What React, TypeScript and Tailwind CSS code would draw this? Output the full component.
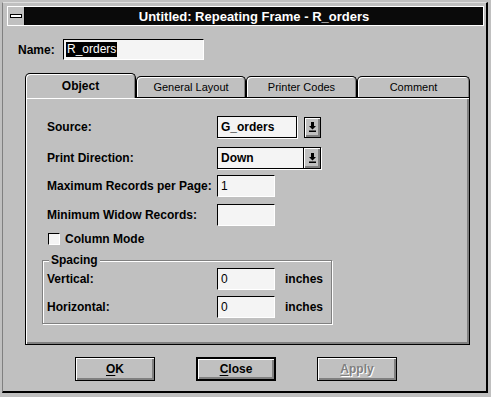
import React from 'react'

const raised = 'shadow-[inset_1px_1px_0_#ffffff,inset_-2px_-2px_0_#808080]'

const DownArrow = () => (
  <svg width="7" height="10" viewBox="0 0 7 10">
    <path d="M2 0h3v4h2L3.5 7.5 0 4h2z" fill="#000" />
    <rect x="0" y="8.5" width="7" height="1.5" fill="#000" />
  </svg>
)

const Sunken = ({ value, w }: { value?: string; w: string }) => (
  <div
    className={`${w} h-[22px] bg-[#f4f4f4] border border-t-black border-l-black border-r-white border-b-white flex items-center pl-[3px] text-[12px] leading-none`}
  >
    {value}
  </div>
)

const Label = ({ children }: { children: React.ReactNode }) => (
  <div className="w-[170px] text-[12px] font-bold leading-none">{children}</div>
)

const Button = ({
  u,
  rest,
  isDefault,
  disabled,
}: {
  u: string
  rest: string
  isDefault?: boolean
  disabled?: boolean
}) => (
  <div
    className={`w-[80px] h-[24px] bg-[#c0c0c0] border-black ${isDefault ? 'border-2' : 'border'} ${raised} flex items-center justify-center text-[12px] font-bold leading-none ${
      disabled ? 'text-[#808080] [text-shadow:1px_1px_0_#ffffff]' : 'text-black'
    }`}
  >
    <span className="underline underline-offset-2">{u}</span>
    {rest}
  </div>
)

const tabs = [
  { name: 'General Layout', w: 'w-[110px]' },
  { name: 'Printer Codes', w: 'w-[111px]' },
  { name: 'Comment', w: 'w-[113px]' },
]

export default function App() {
  return (
    <div className="w-[491px] h-[397px] bg-[#c0c0c0] pt-[2px] pl-[2px] font-['Liberation_Sans',Arial,sans-serif] text-black">
      <div className="w-[486px] h-[391px] border border-l-[#808080] border-t-[#dfdfdf] border-r-black border-b-black border-r-2 border-b-2 flex flex-col">
        {/* title bar */}
        <div className="ml-[4px] mt-[3px] w-[477px] h-[20px] border border-white bg-[#0a0a0a] flex items-stretch">
          <div className="w-[17px] bg-[#c0c0c0] border-r border-black flex items-center justify-center">
            <div className="w-[12px] h-[4px] bg-white border border-black" />
          </div>
          <div className="flex-1 flex items-center justify-center text-white text-[13px] font-bold leading-none">
            Untitled: Repeating Frame - R_orders
          </div>
        </div>

        {/* name row */}
        <div className="mt-[13px] pl-[15px] flex items-center h-[21px]">
          <div className="w-[45px] text-[12px] font-bold leading-none">Name:</div>
          <div className="w-[141px] h-[21px] bg-[#f4f4f4] border border-t-black border-l-black border-r-white border-b-white flex items-center pl-[2px]">
            <span className="bg-black text-white text-[12px] leading-[15px] px-[1px]">R_orders</span>
          </div>
        </div>

        {/* tabs */}
        <div className="mt-[13px] ml-[22px] h-[24px] flex items-end">
          <div className="relative z-10 -mb-px w-[111px] h-[25px] bg-[#c0c0c0] border-t border-l border-r border-black rounded-t-[5px] shadow-[inset_1px_1px_0_#ffffff,inset_-1px_0_0_#808080] flex items-center justify-center text-[12px] font-bold leading-none">
            Object
          </div>
          {tabs.map((t) => (
            <div
              key={t.name}
              className={`${t.w} h-[21px] bg-[#c0c0c0] border-t border-l border-r border-black rounded-t-[5px] shadow-[inset_1px_1px_0_#ffffff,inset_-1px_0_0_#808080] flex items-center justify-center text-[11px] leading-none`}
            >
              {t.name}
            </div>
          ))}
        </div>

        {/* panel */}
        <div className={`ml-[22px] w-[445px] h-[248px] border border-black ${raised} px-[16px] pt-[18px]`}>
          <div className="pl-[5px] flex flex-col">
            <div className="flex items-center h-[22px]">
              <Label>Source:</Label>
              <div className="w-[80px] h-[22px] bg-[#f4f4f4] border border-black shadow-[1px_1px_0_#ffffff] flex items-center pl-[3px] text-[12px] font-bold leading-none">
                G_orders
              </div>
              <div className={`ml-[7px] w-[17px] h-[21px] bg-[#c0c0c0] border border-black ${raised} flex items-center justify-center`}>
                <DownArrow />
              </div>
            </div>
            <div className="flex items-center h-[22px] mt-[9px]">
              <Label>Print Direction:</Label>
              <div className="w-[104px] h-[22px] bg-[#f4f4f4] border border-black shadow-[1px_1px_0_#ffffff] flex items-stretch">
                <div className="flex-1 flex items-center pl-[3px] text-[12px] font-bold leading-none">Down</div>
                <div className={`w-[17px] bg-[#c0c0c0] border-l border-black ${raised} flex items-center justify-center`}>
                  <DownArrow />
                </div>
              </div>
            </div>
            <div className="flex items-center h-[22px] mt-[6px]">
              <Label>Maximum Records per Page:</Label>
              <Sunken w="w-[58px]" value="1" />
            </div>
            <div className="flex items-center h-[22px] mt-[7px]">
              <Label>Minimum Widow Records:</Label>
              <Sunken w="w-[58px]" />
            </div>
            <div className="flex items-center h-[12px] mt-[7px] pl-px">
              <div className="w-[12px] h-[12px] bg-[#f4f4f4] border border-t-black border-l-black border-r-white border-b-white" />
              <div className="ml-[5px] text-[12px] font-bold leading-none">Column Mode</div>
            </div>
          </div>

          {/* spacing group */}
          <div className="relative mt-[15px] w-[290px] h-[64px] border border-[#808080] shadow-[1px_1px_0_#ffffff,inset_1px_1px_0_#ffffff] pt-[7px] pl-[4px] flex flex-col gap-[6px]">
            <div className="absolute -top-[8px] left-[6px] px-[2px] bg-[#c0c0c0] text-[12px] font-bold leading-[15px]">
              Spacing
            </div>
            <div className="flex items-center h-[22px]">
              <Label>Vertical:</Label>
              <Sunken w="w-[58px]" value="0" />
              <div className="ml-[10px] text-[12px] font-bold leading-none">inches</div>
            </div>
            <div className="flex items-center h-[22px]">
              <Label>Horizontal:</Label>
              <Sunken w="w-[58px]" value="0" />
              <div className="ml-[10px] text-[12px] font-bold leading-none">inches</div>
            </div>
          </div>
        </div>

        {/* buttons */}
        <div className="mt-[12px] ml-[72px] flex gap-[41px]">
          <Button u="O" rest="K" />
          <Button u="C" rest="lose" isDefault />
          <Button u="A" rest="pply" disabled />
        </div>
      </div>
    </div>
  )
}
